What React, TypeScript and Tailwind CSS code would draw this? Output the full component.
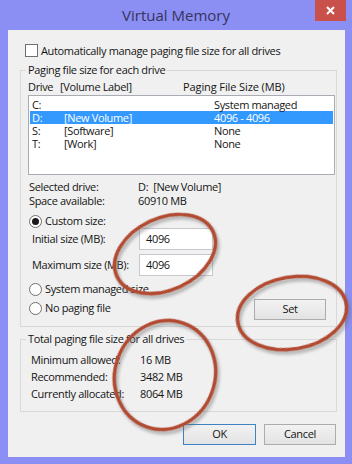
import React from "react";

function Radio({ checked }: { checked?: boolean }) {
  return (
    <span className="w-[13px] h-[13px] rounded-full border border-[#6f6f6f] bg-white flex items-center justify-center shrink-0">
      {checked ? <span className="w-[7px] h-[7px] rounded-full bg-[#1a1a1a]" /> : null}
    </span>
  );
}

function Btn({ children, def }: { children: React.ReactNode; def?: boolean }) {
  return (
    <div
      className={
        "h-[21px] flex items-center justify-center bg-gradient-to-b from-[#f2f2f2] to-[#e3e3e3] border " +
        (def ? "border-[#3c83c4]" : "border-[#acacac]")
      }
    >
      {children}
    </div>
  );
}

export default function App() {
  const rows = [
    { d: "C:", l: "", s: "System managed", sel: false },
    { d: "D:", l: "[New Volume]", s: "4096 - 4096", sel: true },
    { d: "S:", l: "[Software]", s: "None", sel: false },
    { d: "T:", l: "[Work]", s: "None", sel: false },
  ];
  return (
    <div className="relative w-[352px] h-[464px] bg-[#8b8ef2] overflow-hidden font-['Open_Sans',sans-serif] text-[11px] tracking-[-0.35px] text-[#151515]">
      <div className="h-[30px] flex items-center justify-center relative">
        <span className="text-[15px] tracking-normal text-[#35355f]">Virtual Memory</span>
        <div className="absolute top-0 right-[6px] w-[31px] h-[21px] bg-[#c9504b] flex items-center justify-center">
          <svg width="9" height="9" viewBox="0 0 9 9">
            <path d="M1 1 L8 8 M8 1 L1 8" stroke="white" strokeWidth="2" />
          </svg>
        </div>
      </div>
      <div className="ml-[8px] w-[337px] h-[427px] bg-[#f0f0f0] flex flex-col">
        <div className="mt-[14px] ml-[17px] h-[13px] flex items-center gap-[3px]">
          <span className="w-[13px] h-[13px] border border-[#6f6f6f] bg-white shrink-0" />
          <span className="leading-[13px]">Automatically manage paging file size for all drives</span>
        </div>

        <fieldset className="mt-[5px] ml-[12px] w-[317px] border border-[#d9d9d9] pl-[5px] pb-[6px]">
          <legend className="px-[2px] leading-[16px]">Paging file size for each drive</legend>
          <div className="mt-[2px] h-[14px] leading-[14px] flex ml-[2px]">
            <span className="w-[32px]">Drive</span>
            <span className="w-[123px]">[Volume Label]</span>
            <span className="tracking-[-0.1px]">Paging File Size (MB)</span>
          </div>
          <div className="mt-[1px] ml-[2px] w-[307px] h-[80px] bg-white border border-[#a9acb3] pt-[2px]">
            {rows.map((r) => (
              <div
                key={r.d}
                className={
                  "h-[13px] leading-[13px] mx-[1px] pl-[2px] flex " +
                  (r.sel ? "bg-[#3399ff] text-white" : "")
                }
              >
                <span className="w-[32px]">{r.d}</span>
                <span className="w-[150px]">{r.l}</span>
                <span>{r.s}</span>
              </div>
            ))}
          </div>
          <div className="mt-[5px] ml-[3px] h-[14px] leading-[14px] flex">
            <span className="w-[109px]">Selected drive:</span>
            <span>D:&nbsp;&nbsp;[New Volume]</span>
          </div>
          <div className="ml-[3px] h-[14px] leading-[14px] flex">
            <span className="w-[109px]">Space available:</span>
            <span>60910 MB</span>
          </div>
          <div className="mt-[6px] ml-[3px] h-[14px] flex items-center gap-[3px]">
            <Radio checked />
            <span className="leading-[14px]">Custom size:</span>
          </div>
          <div className="ml-[6px] h-[22px] flex items-center">
            <span className="w-[107px]">Initial size (MB):</span>
            <div className="w-[74px] h-[22px] bg-white border border-[#c5c7cc] pl-[6px] flex items-center">4096</div>
          </div>
          <div className="mt-[4px] ml-[6px] h-[22px] flex items-center">
            <span className="w-[107px]">Maximum size (MB):</span>
            <div className="w-[74px] h-[22px] bg-white border border-[#c5c7cc] pl-[6px] flex items-center">4096</div>
          </div>
          <div className="mt-[6px] flex items-start">
            <div className="ml-[3px] flex flex-col">
              <div className="h-[14px] flex items-center gap-[3px]">
                <Radio />
                <span className="leading-[14px]">System managed size</span>
              </div>
              <div className="mt-[5px] h-[14px] flex items-center gap-[3px]">
                <Radio />
                <span className="leading-[14px]">No paging file</span>
              </div>
            </div>
            <div className="ml-auto mr-[10px] mt-[17px] w-[72px]">
              <Btn>Set</Btn>
            </div>
          </div>
        </fieldset>

        <fieldset className="mt-[4px] ml-[12px] w-[317px] border border-[#d9d9d9] pl-[5px] pb-[9px]">
          <legend className="px-[2px] leading-[16px]">Total paging file size for all drives</legend>
          <div className="mt-[4px] ml-[5px] flex flex-col">
            <div className="h-[17px] leading-[17px] flex">
              <span className="w-[109px]">Minimum allowed:</span>
              <span>16 MB</span>
            </div>
            <div className="h-[17px] leading-[17px] flex">
              <span className="w-[109px]">Recommended:</span>
              <span>3482 MB</span>
            </div>
            <div className="h-[17px] leading-[17px] flex">
              <span className="w-[109px]">Currently allocated:</span>
              <span>8064 MB</span>
            </div>
          </div>
        </fieldset>

        <div className="mt-[12px] flex justify-end gap-[8px] pr-[9px]">
          <div className="w-[73px]">
            <Btn def>OK</Btn>
          </div>
          <div className="w-[72px]">
            <Btn>Cancel</Btn>
          </div>
        </div>
      </div>

      <svg className="absolute inset-0 pointer-events-none" width="352" height="464" viewBox="0 0 352 464">
        <defs>
          <filter id="blur" x="-20%" y="-20%" width="140%" height="140%">
            <feGaussianBlur stdDeviation="1.5" />
          </filter>
        </defs>
        <g fill="none" stroke="#6b6b6b" strokeWidth="4" opacity="0.45" filter="url(#blur)">
          <ellipse cx="167" cy="257" rx="53" ry="36" transform="rotate(-25 167 257)" />
          <ellipse cx="294" cy="316" rx="55" ry="36" transform="rotate(-10 294 316)" />
          <ellipse cx="167" cy="378" rx="50" ry="55" transform="rotate(20 167 378)" />
        </g>
        <g fill="none" stroke="#b24a31" strokeWidth="3.5">
          <ellipse cx="165" cy="254" rx="53" ry="36" transform="rotate(-25 165 254)" />
          <ellipse cx="292" cy="313" rx="55" ry="36" transform="rotate(-10 292 313)" />
          <ellipse cx="165" cy="375" rx="50" ry="55" transform="rotate(20 165 375)" />
        </g>
      </svg>
    </div>
  );
}
